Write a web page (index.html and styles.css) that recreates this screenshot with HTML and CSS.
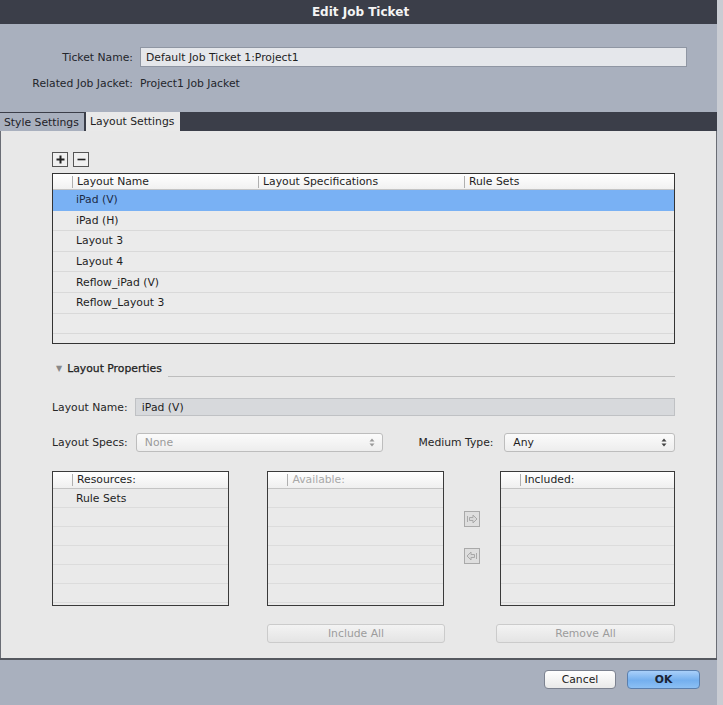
FILE: index.html
```html
<!DOCTYPE html>
<html>
<head>
<meta charset="utf-8">
<link rel="stylesheet" href="styles.css">
</head>
<body>
<div class="dialog">
  <div class="titlebar">Edit Job Ticket</div>
  <div class="header">
    <div class="hrow">
      <span class="hlabel">Ticket Name:</span>
      <div class="tinput">Default Job Ticket 1:Project1</div>
    </div>
    <div class="hrow hrow2">
      <span class="hlabel">Related Job Jacket:</span>
      <span class="hvalue">Project1 Job Jacket</span>
    </div>
  </div>
  <div class="tabbar">
    <div class="tab">Style Settings</div>
    <div class="tab active">Layout Settings</div>
  </div>
  <div class="content">
    <div class="toolbar">
      <span class="sqbtn"><svg width="13" height="13" viewBox="0 0 13 13"><path d="M6.5 2.5v8M2.5 6.5h8" stroke="#222" stroke-width="2" fill="none"/></svg></span>
      <span class="sqbtn"><svg width="13" height="13" viewBox="0 0 13 13"><path d="M2.5 6.5h8" stroke="#222" stroke-width="1.6" fill="none"/></svg></span>
    </div>
    <div class="table">
      <div class="thead">
        <span class="th c1">Layout Name</span>
        <span class="th c2">Layout Specifications</span>
        <span class="th c3">Rule Sets</span>
      </div>
      <div class="trow selected"><span class="td">iPad (V)</span></div>
      <div class="trow"><span class="td">iPad (H)</span></div>
      <div class="trow"><span class="td">Layout 3</span></div>
      <div class="trow"><span class="td">Layout 4</span></div>
      <div class="trow"><span class="td">Reflow_iPad (V)</span></div>
      <div class="trow"><span class="td">Reflow_Layout 3</span></div>
      <div class="trow"><span class="td"></span></div>
      <div class="trow"><span class="td"></span></div>
    </div>
    <div class="section">
      <span class="tri">▼</span>
      <span class="stitle">Layout Properties</span>
      <span class="sline"></span>
    </div>
    <div class="frow namerow">
      <span class="flabel">Layout Name:</span>
      <div class="ninput">iPad (V)</div>
    </div>
    <div class="frow specrow">
      <span class="flabel">Layout Specs:</span>
      <div class="select spec disabled"><span>None</span><svg width="6" height="9" viewBox="0 0 6 9"><path d="M3 0.5L5.5 3.5H0.5zM3 8.5L5.5 5.5H0.5z" fill="#999"/></svg></div>
      <span class="mlabel">Medium Type:</span>
      <div class="select medium"><span>Any</span><svg width="6" height="9" viewBox="0 0 6 9"><path d="M3 0.5L5.5 3.5H0.5zM3 8.5L5.5 5.5H0.5z" fill="#444"/></svg></div>
    </div>
    <div class="boxes">
      <div class="box res">
        <div class="bhead"><span class="bh">Resources:</span></div>
        <div class="brow"><span class="bd">Rule Sets</span></div>
        <div class="brow"></div><div class="brow"></div><div class="brow"></div><div class="brow"></div><div class="brow"></div><div class="brow"></div>
      </div>
      <div class="box avail">
        <div class="bhead"><span class="bh dim">Available:</span></div>
        <div class="brow"></div><div class="brow"></div><div class="brow"></div><div class="brow"></div><div class="brow"></div><div class="brow"></div><div class="brow"></div>
      </div>
      <div class="arrows">
        <span class="abtn"><svg width="14" height="14" viewBox="0 0 14 14"><path d="M2.5 4v6" stroke="#aaa" fill="none"/><path d="M4.5 5.5h3.5v-2.5l4 4l-4 4v-2.5h-3.5z" fill="#d8d8d8" stroke="#a8a8a8"/></svg></span>
        <span class="abtn"><svg width="14" height="14" viewBox="0 0 14 14"><path d="M11.5 4v6" stroke="#aaa" fill="none"/><path d="M9.5 5.5h-3.5v-2.5l-4 4l4 4v-2.5h3.5z" fill="#d8d8d8" stroke="#a8a8a8"/></svg></span>
      </div>
      <div class="box incl">
        <div class="bhead"><span class="bh">Included:</span></div>
        <div class="brow"></div><div class="brow"></div><div class="brow"></div><div class="brow"></div><div class="brow"></div><div class="brow"></div><div class="brow"></div>
      </div>
    </div>
    <div class="brow-buttons">
      <div class="pbtn include">Include All</div>
      <div class="pbtn remove">Remove All</div>
    </div>
  </div>
  <div class="footer">
    <div class="fbtn cancel">Cancel</div>
    <div class="fbtn ok">OK</div>
  </div>
</div>
</body>
</html>
```
FILE: styles.css
```css
* { box-sizing: border-box; }
html, body { margin: 0; padding: 0; }
body {
  width: 723px;
  height: 705px;
  background: #c9ccd3;
  font-family: "DejaVu Sans", "Liberation Sans", sans-serif;
  font-size: 10.8px;
  color: #1e1e1e;
  overflow: hidden;
}
.dialog {
  width: 717px;
  height: 705px;
  display: flex;
  flex-direction: column;
}
.titlebar {
  height: 24px;
  background: #3b3e49;
  color: #f4f4f4;
  font-weight: bold;
  font-size: 12px;
  display: flex;
  align-items: center;
  justify-content: center;
  padding-left: 4px;
}
.header {
  height: 88px;
  background: #a9b0be;
  padding-top: 23px;
  display: flex;
  flex-direction: column;
}
.hrow {
  display: flex;
  align-items: center;
  height: 20px;
}
.hrow2 { margin-top: 8px; height: 16px; }
.hlabel {
  width: 133px;
  text-align: right;
  color: #23262c;
  white-space: nowrap;
}
.tinput {
  margin-left: 7px;
  width: 547px;
  height: 20px;
  background: #e5e7eb;
  border: 1px solid #8f96a3;
  padding-left: 5px;
  display: flex;
  align-items: center;
  color: #1e1e1e;
}
.hvalue { margin-left: 7px; color: #23262c; }
.tabbar {
  height: 19px;
  background: #3b3e49;
  display: flex;
  align-items: flex-end;
  gap: 2px;
}
.tab {
  height: 18px;
  background: #a9b0be;
  padding: 0 4px;
  display: flex;
  align-items: center;
  color: #1e2127;
  width: 84px;
  white-space: nowrap;
  overflow: hidden;
}
.tab.active {
  background: #e9e9e9;
  width: 94px;
  height: 19px;
  color: #1e1e1e;
}
.content {
  height: 527px;
  background: #e8e8e8;
  border-left: 1px solid #6a6d75;
  border-right: 1px solid #6a6d75;
  padding: 21px 41px 0 51px;
  display: flex;
  flex-direction: column;
}
.toolbar {
  display: flex;
  gap: 5px;
  height: 15px;
}
.sqbtn {
  width: 16px;
  height: 15px;
  border: 1px solid #555;
  background: #f0f0f0;
  display: flex;
  align-items: center;
  justify-content: center;
}
.table {
  margin-top: 6px;
  width: 623px;
  height: 171px;
  border: 1.5px solid #333;
  background: #ebebeb;
  overflow: hidden;
}
.thead {
  height: 16px;
  background: linear-gradient(#ffffff, #f1f1f1);
  border-bottom: 1px solid #c4c4c4;
  display: flex;
  align-items: center;
}
.th {
  border-left: 1px solid #b0b0b0;
  padding-left: 4px;
  height: 12px;
  line-height: 12px;
  white-space: nowrap;
}
.th.c1 { margin-left: 19px; width: 186px; }
.th.c2 { width: 206px; }
.th.c3 { width: 200px; }
.trow {
  height: 20.6px;
  border-bottom: 1px solid #d9d9d9;
  display: flex;
  align-items: center;
  padding-left: 23px;
}
.trow.selected {
  background: #79b1f4;
  border-bottom-color: #79b1f4;
  color: #1c2a45;
}
.section {
  margin-top: 17px;
  height: 15px;
  display: flex;
  align-items: center;
  width: 623px;
}
.tri {
  font-size: 8px;
  color: #888;
  margin-left: 4px;
  margin-right: 5px;
}
.stitle { color: #222; -webkit-text-stroke: 0.25px #222; }
.sline {
  flex: 1;
  margin-left: 6px;
  border-bottom: 1px solid #bdbdbd;
  align-self: flex-end;
  margin-bottom: -1px;
}
.frow {
  display: flex;
  align-items: center;
  width: 623px;
}
.namerow { margin-top: 22px; height: 18px; }
.specrow { margin-top: 17px; height: 19px; }
.flabel {
  width: 82px;
  color: #262626;
  white-space: nowrap;
}
.ninput {
  margin-left: 1px;
  width: 541px;
  height: 18px;
  background: #d7d9dc;
  border: 1px solid #bfc1c4;
  padding-left: 6px;
  display: flex;
  align-items: center;
}
.select {
  height: 19px;
  border: 1px solid #bdbdbd;
  border-radius: 3px;
  background: linear-gradient(#fbfbfb, #ededed);
  display: flex;
  align-items: center;
  justify-content: space-between;
  padding: 0 7px 0 8px;
}
.select.spec {
  margin-left: 2px;
  width: 248px;
}
.select.disabled span { color: #9a9a9a; }
.mlabel {
  margin-left: 35px;
  width: 86px;
  color: #262626;
  white-space: nowrap;
}
.select.medium { width: 171px; }
.boxes {
  margin-top: 19px;
  height: 135px;
  display: flex;
}
.box {
  height: 135px;
  border: 1.5px solid #3a3a3a;
  background: #eaeaea;
  overflow: hidden;
}
.box.res { width: 178px; }
.box.avail { width: 177px; margin-left: 38px; }
.box.incl { width: 176px; }
.bhead {
  height: 17px;
  background: linear-gradient(#ffffff, #efefef);
  border-bottom: 1px solid #c4c4c4;
  display: flex;
  align-items: center;
}
.bh {
  margin-left: 19px;
  border-left: 1px solid #b0b0b0;
  padding-left: 4px;
  height: 12px;
  line-height: 12px;
}
.bh.dim { color: #a8a8a8; }
.brow {
  height: 19px;
  border-bottom: 1px solid #dcdcdc;
  display: flex;
  align-items: center;
  padding-left: 23px;
}
.arrows {
  width: 56px;
  display: flex;
  flex-direction: column;
  align-items: center;
  padding-top: 40px;
  gap: 21px;
}
.abtn {
  width: 16px;
  height: 16px;
  border: 1px solid #a9a9a9;
  background: #dedede;
  display: flex;
  align-items: center;
  justify-content: center;
}
.brow-buttons {
  margin-top: 18px;
  display: flex;
  height: 19px;
}
.pbtn {
  height: 19px;
  border: 1px solid #cbcbcb;
  border-radius: 3px;
  background: linear-gradient(#f3f3f3, #e4e4e4);
  color: #9c9c9c;
  display: flex;
  align-items: center;
  justify-content: center;
}
.pbtn.include { margin-left: 215px; width: 178px; }
.pbtn.remove { margin-left: 51px; width: 179px; }
.footer {
  flex: 1;
  background: #a9b0be;
  border-top: 2px solid #55585f;
  display: flex;
  justify-content: flex-end;
  padding: 10px 17px 0 0;
  gap: 11px;
}
.fbtn {
  height: 19px;
  border-radius: 4px;
  display: flex;
  align-items: center;
  justify-content: center;
  border: 1px solid #7c8290;
}
.fbtn.cancel {
  width: 72px;
  background: linear-gradient(#ffffff, #e9e9e9);
  color: #222;
}
.fbtn.ok {
  width: 73px;
  background: linear-gradient(#a9d0fa, #74afee 55%, #8cc0f4);
  border-color: #5a7fae;
  color: #1b2433;
  font-weight: bold;
}
```
